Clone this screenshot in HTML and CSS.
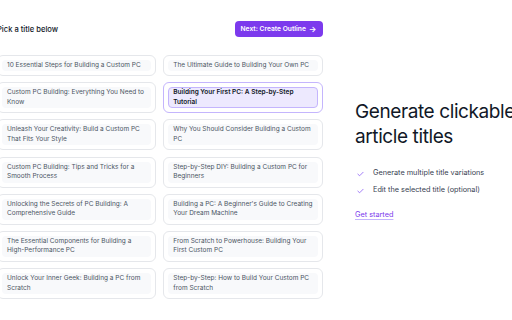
FILE: index.html
```html
<!DOCTYPE html>
<html>
<head>
<meta charset="utf-8">
<link rel="stylesheet" href="styles.css">
</head>
<body>
<div class="page">
  <section class="picker">
    <div class="picker-head">
      <h2 class="picker-title">Pick a title below</h2>
      <button class="next-btn">Next: Create Outline <span class="arrow">&rarr;</span></button>
    </div>
    <div class="grid">
      <div class="card"><div class="card-inner">10 Essential Steps for Building a Custom PC</div></div>
      <div class="card"><div class="card-inner">The Ultimate Guide to Building Your Own PC</div></div>
      <div class="card"><div class="card-inner">Custom PC Building: Everything You Need to Know</div></div>
      <div class="card selected"><div class="card-inner">Building Your First PC: A Step-by-Step Tutorial</div></div>
      <div class="card"><div class="card-inner">Unleash Your Creativity: Build a Custom PC That Fits Your Style</div></div>
      <div class="card"><div class="card-inner">Why You Should Consider Building a Custom PC</div></div>
      <div class="card"><div class="card-inner">Custom PC Building: Tips and Tricks for a Smooth Process</div></div>
      <div class="card"><div class="card-inner">Step-by-Step DIY: Building a Custom PC for Beginners</div></div>
      <div class="card"><div class="card-inner">Unlocking the Secrets of PC Building: A Comprehensive Guide</div></div>
      <div class="card"><div class="card-inner">Building a PC: A Beginner's Guide to Creating Your Dream Machine</div></div>
      <div class="card"><div class="card-inner">The Essential Components for Building a High-Performance PC</div></div>
      <div class="card"><div class="card-inner">From Scratch to Powerhouse: Building Your First Custom PC</div></div>
      <div class="card"><div class="card-inner">Unlock Your Inner Geek: Building a PC from Scratch</div></div>
      <div class="card"><div class="card-inner">Step-by-Step: How to Build Your Custom PC from Scratch</div></div>
    </div>
  </section>
  <aside class="info">
    <h1 class="info-title">Generate clickable article titles</h1>
    <ul class="features">
      <li class="feature"><svg class="check" viewBox="0 0 8 6" width="7" height="6"><path d="M1 3.2 L3 5 L7 1" fill="none" stroke="#8b5cf6" stroke-width="0.9" stroke-linecap="round" stroke-linejoin="round"/></svg>Generate multiple title variations</li>
      <li class="feature"><svg class="check" viewBox="0 0 8 6" width="7" height="6"><path d="M1 3.2 L3 5 L7 1" fill="none" stroke="#8b5cf6" stroke-width="0.9" stroke-linecap="round" stroke-linejoin="round"/></svg>Edit the selected title (optional)</li>
    </ul>
    <a class="start-link" href="#">Get started</a>
  </aside>
</div>
</body>
</html>
```

FILE: styles.css
```css
html, body {
  margin: 0;
  padding: 0;
  background: #ffffff;
  font-family: Inter, "Noto Sans", sans-serif;
  overflow: hidden;
}

.page {
  display: flex;
  align-items: flex-start;
  margin-left: -3px;
  padding-top: 21px;
  width: 560px;
}

.picker {
  width: 325.5px;
  flex: none;
}

.picker-head {
  display: flex;
  justify-content: space-between;
  align-items: center;
  height: 16px;
  margin-bottom: 17.5px;
}

.picker-title {
  margin: 0;
  font-size: 7.6px;
  font-weight: 500;
  color: #111827;
}

.next-btn {
  display: flex;
  align-items: center;
  gap: 3px;
  height: 16px;
  width: 88px;
  justify-content: center;
  padding: 0;
  border: none;
  border-radius: 4px;
  background: #7c3aed;
  color: #ffffff;
  font-family: Inter, sans-serif;
  font-size: 6.7px;
  font-weight: 600;
}

.arrow {
  font-size: 8px;
  line-height: 1;
}

.grid {
  display: grid;
  grid-template-columns: 1fr 1fr;
  column-gap: 7px;
  row-gap: 6.2px;
}

.card {
  border: 1px solid #e5e7eb;
  border-radius: 6px;
  padding: 4px;
}

.card-inner {
  background: #f8f9fb;
  border: 1px solid transparent;
  border-radius: 4px;
  padding: 0 2px 0 4px;
  font-size: 6.5px;
  line-height: 9.5px;
  color: #4b5563;
}

.card.selected {
  border-color: #c4b5fd;
}

.card.selected .card-inner {
  background: #ede9fe;
  border-color: #c4b5fd;
  color: #111827;
  font-weight: 600;
}

.info {
  margin-left: 32.5px;
  padding-top: 78px;
  flex: none;
  width: 200px;
}

.info-title {
  margin: 0;
  font-size: 19px;
  line-height: 25px;
  font-weight: 400;
  letter-spacing: -0.4px;
  color: #111827;
}

.features {
  list-style: none;
  margin: 15px 0 0 0;
  padding: 0;
}

.feature {
  display: flex;
  align-items: center;
  gap: 9px;
  height: 17px;
  padding-left: 2px;
  font-size: 7.3px;
  color: #374151;
}

.check {
  flex: none;
  margin-top: 2px;
}

.start-link {
  display: inline-block;
  margin-top: 12px;
  font-size: 7.3px;
  color: #7c3aed;
  text-decoration: underline;
  text-decoration-color: #c4b5fd;
  text-underline-offset: 2px;
}
```
